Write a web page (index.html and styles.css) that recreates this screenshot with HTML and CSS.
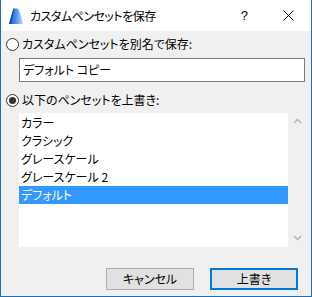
FILE: index.html
```html
<!DOCTYPE html>
<html lang="ja">
<head>
<meta charset="utf-8">
<link rel="stylesheet" href="styles.css">
</head>
<body>
<div class="window">
  <div class="titlebar">
    <svg class="app-icon" width="15" height="17" viewBox="0 0 15 17">
      <defs>
        <linearGradient id="g" x1="0" y1="0" x2="1" y2="0">
          <stop offset="0" stop-color="#1a55c8"/>
          <stop offset="0.5" stop-color="#4a8ff0"/>
          <stop offset="1" stop-color="#bcd8fb"/>
        </linearGradient>
      </defs>
      <path d="M0 16 L4.5 0.5 L9 0.5 Q12 6 14 16 Z" fill="url(#g)"/>
      <path d="M0 16 L4.5 0.5 L5.5 0.5 L2 16 Z" fill="#1545b0"/>
    </svg>
    <span class="title">カスタムペンセットを保存</span>
    <span class="help">?</span>
    <svg class="close" width="11" height="11" viewBox="0 0 11 11">
      <path d="M0.5 0.5 L10.5 10.5 M10.5 0.5 L0.5 10.5" stroke="#000" stroke-width="1"/>
    </svg>
  </div>
  <div class="content">
    <label class="radio-row first">
      <span class="radio"></span>
      <span class="label">カスタムペンセットを別名で保存:</span>
    </label>
    <div class="textbox">デフォルト コピー</div>
    <label class="radio-row second">
      <span class="radio checked"><span class="dot"></span></span>
      <span class="label">以下のペンセットを上書き:</span>
    </label>
    <div class="listbox">
      <ul class="items">
        <li>カラー</li>
        <li>クラシック</li>
        <li>グレースケール</li>
        <li>グレースケール 2</li>
        <li class="selected">デフォルト</li>
      </ul>
      <div class="scrollbar">
        <svg width="9" height="6" viewBox="0 0 9 6"><path d="M1 5 L4.5 1.5 L8 5" fill="none" stroke="#b8b8b8" stroke-width="1.6"/></svg>
        <svg width="9" height="6" viewBox="0 0 9 6"><path d="M1 1 L4.5 4.5 L8 1" fill="none" stroke="#b8b8b8" stroke-width="1.6"/></svg>
      </div>
    </div>
    <div class="buttons">
      <button class="btn">キャンセル</button>
      <button class="btn default">上書き</button>
    </div>
  </div>
</div>
</body>
</html>
```
FILE: styles.css
```css
html, body {
  margin: 0;
  padding: 0;
}
body {
  width: 312px;
  height: 297px;
  background: #f0f0f0;
  font-family: "Noto Sans CJK JP", "Noto Sans", sans-serif;
  font-size: 12px;
  color: #000;
  font-feature-settings: "palt";
}
.window {
  width: 312px;
  height: 297px;
  box-sizing: border-box;
  border: 1px solid #1f6fb7;
  border-top: 0;
  display: flex;
  flex-direction: column;
}
.titlebar {
  height: 31px;
  background: #fff;
  display: flex;
  align-items: center;
  padding-left: 8px;
}
.app-icon {
  margin-top: 1px;
}
.title {
  margin-left: 6px;
  line-height: 16px;
  letter-spacing: -0.5px;
}
.help {
  margin-left: auto;
  margin-right: 35px;
  font-family: "Liberation Sans", sans-serif;
  font-size: 13px;
}
.close {
  margin-right: 17px;
}
.content {
  flex: 1;
  display: flex;
  flex-direction: column;
  padding: 0 5px;
}
.radio-row {
  display: flex;
  align-items: center;
  height: 14px;
  line-height: 14px;
}
.radio-row.first {
  margin-top: 6px;
}
.radio-row.second {
  margin-top: 11px;
}
.radio {
  width: 11px;
  height: 11px;
  border: 1px solid #333;
  border-radius: 50%;
  background: #fff;
  display: flex;
  align-items: center;
  justify-content: center;
  margin-right: 3px;
}
.dot {
  width: 7px;
  height: 7px;
  border-radius: 50%;
  background: #333;
}
.textbox {
  margin: 7px 0 0 13px;
  width: 286px;
  height: 24px;
  box-sizing: border-box;
  border: 1px solid #7a7a7a;
  background: #fff;
  padding-left: 3px;
  line-height: 22px;
}
.listbox {
  margin: 6px 0 0 13px;
  width: 286px;
  height: 134px;
  display: flex;
}
.items {
  list-style: none;
  margin: 0;
  padding: 1px 0 0;
  width: 269px;
  background: #fff;
}
.items li {
  height: 18px;
  line-height: 18px;
  padding-left: 2px;
}
.items li.selected {
  background: #3399ff;
  color: #fff;
}
.scrollbar {
  flex: 1;
  display: flex;
  flex-direction: column;
  justify-content: space-between;
  align-items: center;
  padding: 5px 0 6px 1px;
}
.buttons {
  margin-top: 21px;
  display: flex;
  justify-content: flex-end;
  gap: 16px;
  padding-right: 8px;
}
.btn {
  width: 88px;
  height: 22px;
  box-sizing: border-box;
  border: 1px solid #adadad;
  background: #e1e1e1;
  font-family: "Noto Sans CJK JP", "Noto Sans", sans-serif;
  font-size: 12px;
  font-feature-settings: "palt";
  color: #000;
  padding: 0;
  line-height: 18px;
}
.btn.default {
  border: 2px solid #0078d7;
}
```
